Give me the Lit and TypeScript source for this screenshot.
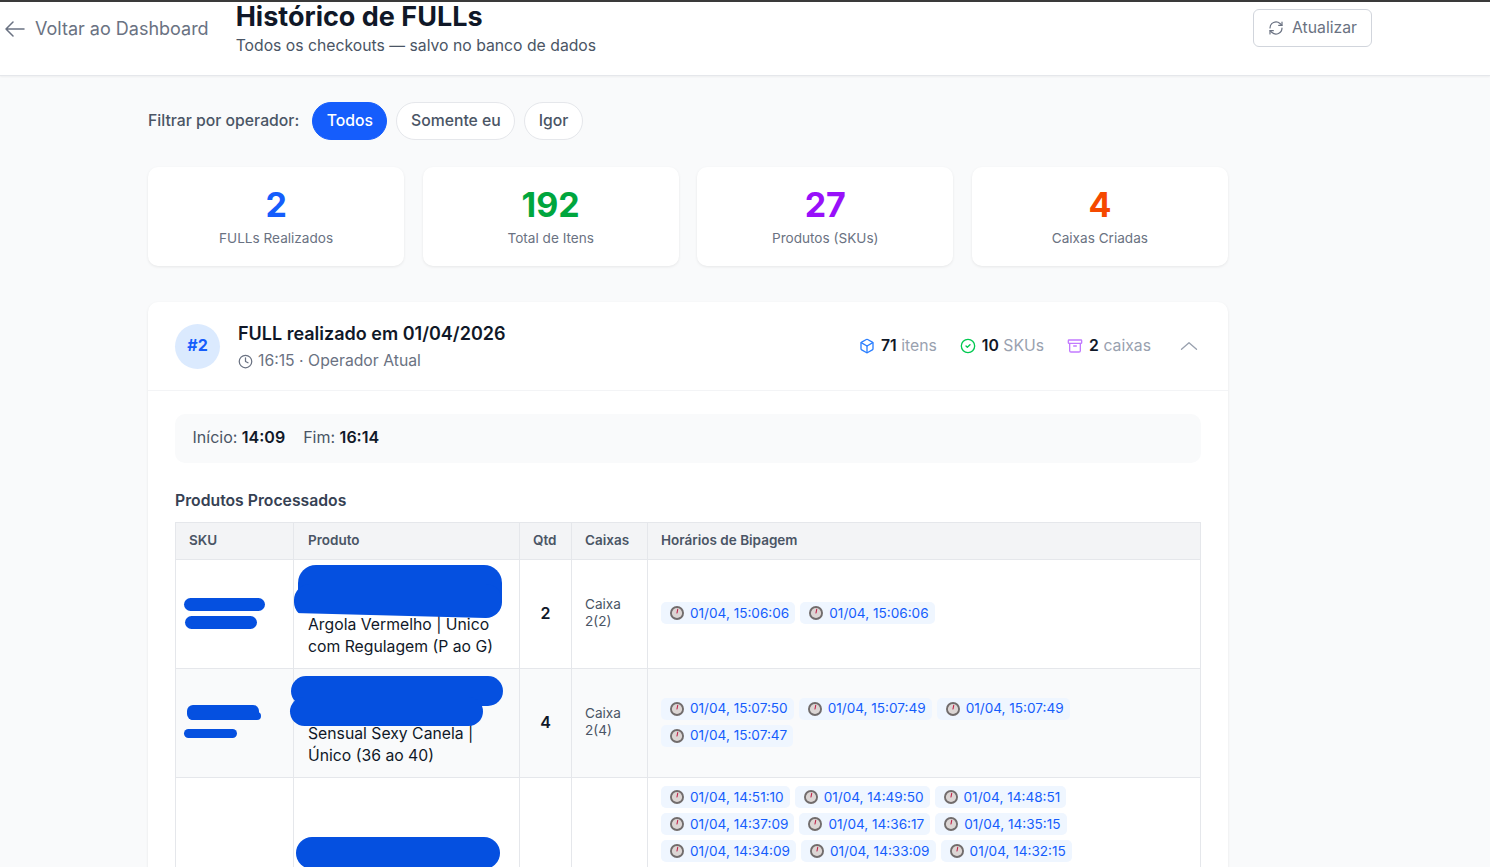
import { LitElement, html, css } from "lit";
import { customElement } from "lit/decorators.js";

const stopwatch = html`<svg class="sw" viewBox="0 0 14 14" aria-hidden="true">
  <circle cx="7" cy="7" r="7" fill="#716c6c"></circle>
  <circle cx="7" cy="7" r="5.1" fill="#dcd6d4"></circle>
  <path d="M7 7 7.7 3.4" stroke="#c2234a" stroke-width="1.1" stroke-linecap="round"></path>
</svg>`;

const chip = (t: string) => html`<span class="chip">${stopwatch}<span class="chip-t">${t}</span></span>`;

interface Row { qty: string; box: string; times: string[]; lines: string[]; alt?: boolean; kind: number }

const blank = "\u00a0";
const rows: Row[] = [
  { kind: 1, qty: "2", box: "2(2)", lines: [blank, blank, "Argola Vermelho | Unico", "com Regulagem (P ao G)"],
    times: ["15:06:06", "15:06:06"] },
  { kind: 2, alt: true, qty: "4", box: "2(4)", lines: [blank, blank, "Sensual Sexy Canela |", "Único (36 ao 40)"],
    times: ["15:07:50", "15:07:49", "15:07:49", "15:07:47"] },
  { kind: 3, qty: "", box: "", lines: [blank],
    times: ["14:51:10", "14:49:50", "14:48:51", "14:37:09", "14:36:17", "14:35:15", "14:34:09", "14:33:09", "14:32:15"] },
];

@customElement("app-root")
export class AppRoot extends LitElement {
  static styles = css`
    :host { display: block; height: 100vh; overflow: hidden; background: #f9fafb; font-family: Inter, "Liberation Sans", sans-serif; color: #101828; }
    * { box-sizing: border-box; }
    header { height: 76px; background: #fff; border-top: 2px solid #3a3a3a; border-bottom: 1px solid #e5e7eb; box-shadow: 0 1px 2px rgba(0,0,0,.05); display: flex; padding: 0 118px 0 5px; }
    .back { display: flex; align-items: center; gap: 10px; height: 53px; font-size: 18px; color: #6a7282; }
    .back svg { width: 20px; height: 20px; }
    .titles { margin: -3px 0 0 27px; flex: 1; }
    h1 { margin: 0; font-size: 27px; line-height: 36px; font-weight: 700; color: #101828; }
    .titles p { margin: -1px 0 0; font-size: 15.75px; line-height: 24px; color: #4a5565; }
    .refresh { margin-top: 7px; width: 119px; height: 38px; border: 1px solid #d1d5dc; border-radius: 6px; background: #fff; display: flex; align-items: center; justify-content: center; gap: 8px; font-size: 15.75px; color: #6a7282; padding-bottom: 2px; }
    .refresh svg { width: 16px; height: 16px; margin-top: 2px; }
    main { width: 1080px; margin: 26px 0 0 148px; }
    .filter { display: flex; align-items: center; gap: 9px; }
    .filter label { font-size: 15.75px; font-weight: 500; color: #4a5565; margin-right: 4px; padding-bottom: 2px; }
    .pill { height: 38px; padding: 0 13.5px 2px; border: 1px solid #e5e7eb; background: #fff; border-radius: 19px; display: flex; align-items: center; font-size: 15.75px; font-weight: 500; color: #4a5565; }
    .pill.on { background: #155dfc; border-color: #155dfc; color: #fff; }
    .stats { margin-top: 27px; display: grid; grid-template-columns: repeat(4, 1fr); gap: 18.4px; }
    .stat { height: 99px; background: #fff; border-radius: 10px; box-shadow: 0 1px 3px rgba(0,0,0,.08); display: flex; flex-direction: column; align-items: center; padding-top: 18px; }
    .stat b { font-size: 34px; line-height: 40px; font-weight: 700; }
    .stat span { margin-top: 3px; font-size: 13.6px; line-height: 20px; color: #6a7282; }
    .blue { color: #155dfc; } .green { color: #00a63e; } .purple { color: #9810fa; } .orange { color: #f54900; }
    .card { margin-top: 36px; background: #fff; border-radius: 10px; box-shadow: 0 1px 3px rgba(0,0,0,.08); }
    .card-head { height: 89px; display: flex; align-items: center; padding: 0 29px 0 27px; border-bottom: 1px solid #f3f4f6; }
    .avatar { width: 45px; height: 45px; border-radius: 50%; background: #dbeafe; color: #155dfc; display: flex; align-items: center; justify-content: center; font-size: 16px; font-weight: 700; padding-bottom: 3px; }
    .who { margin-left: 18px; flex: 1; }
    .who h2 { margin: 0; font-size: 18px; line-height: 28px; font-weight: 600; color: #101828; }
    .who div { display: flex; align-items: center; gap: 5px; font-size: 15.75px; line-height: 24px; color: #6a7282; margin-top: 1px; }
    .who svg { width: 15px; height: 15px; margin-top: 1px; }
    .counts { display: flex; align-items: center; gap: 23px; font-size: 15.75px; color: #99a1af; padding-bottom: 2px; }
    .count { display: flex; align-items: center; gap: 6px; }
    .count svg { width: 16px; height: 16px; margin-top: 2px; }
    .count b { color: #101828; font-weight: 600; margin-right: -1.5px; }
    .chev { width: 20px; height: 20px; margin-left: 5px; margin-top: 2px; }
    .body { padding: 23px 27px; }
    .info { height: 49px; background: #f9fafb; border-radius: 10px; display: flex; align-items: center; gap: 18px; padding: 0 17.5px 3px; font-size: 16px; color: #4a5565; }
    .info b { color: #101828; font-weight: 600; }
    h3 { margin: 26px 0 9px; font-size: 15.75px; line-height: 24px; font-weight: 600; color: #364153; }
    table { width: 1026px; border-collapse: collapse; table-layout: fixed; font-size: 13.6px; }
    th, td { border: 1px solid #e5e7eb; padding: 0 13px; }
    th { height: 37px; background: #f3f4f6; text-align: left; font-weight: 600; font-size: 13.5px; color: #4a5565; padding-bottom: 3px; }
    th.p { padding-left: 14px; }
    td { vertical-align: middle; }
    tr.alt td { background: #f9fafb; }
    tr.tall { height: 198px; }
    tr.tall .tcell { vertical-align: top; padding-top: 8px; }
    .sku { position: relative; }
    .prod { position: relative; font-size: 15.75px; line-height: 22px; padding: 10px 13px 10px 14px; color: #101828; }
    .qty { text-align: center; font-size: 16px; font-weight: 600; padding: 0 0 2px; }
    .box { color: #4a5565; line-height: 17px; padding-bottom: 3px; }
    .tcell { padding-bottom: 2px; }
    .times { display: flex; flex-wrap: wrap; gap: 5px; }
    .chip { display: inline-flex; align-items: center; gap: 6px; height: 22px; padding: 0 6px 0 9px; border-radius: 5px; background: #eff6ff; color: #155dfc; font-size: 13.6px; white-space: nowrap; }
    .chip-t { margin-top: -1px; }
    .sw { width: 14px; height: 14px; flex: none; }
    .ink { position: absolute; background: #0550e0; }
  `;

  private sku(kind: number) {
    if (kind === 1) return html`<div class="ink" style="left:8px;top:38px;width:81px;height:13px;border-radius:7px"></div>
      <div class="ink" style="left:9px;top:56px;width:72px;height:13px;border-radius:7px"></div>`;
    if (kind === 2) return html`<div class="ink" style="left:11px;top:36px;width:72px;height:15px;border-radius:6px"></div>
      <div class="ink" style="left:13px;top:43px;width:72px;height:8px;border-radius:4px"></div>
      <div class="ink" style="left:8px;top:60px;width:53px;height:9px;border-radius:5px"></div>`;
    return null;
  }

  private prodInk(kind: number) {
    if (kind === 1) return html`<div class="ink" style="left:4px;top:5px;width:204px;height:40px;border-radius:18px 18px 6px 6px"></div>
      <div class="ink" style="left:0;top:24px;width:208px;height:34px;border-radius:16px;clip-path:polygon(0 0,100% 0,100% 100%,92% 100%,0 85%)"></div>`;
    if (kind === 2) return html`<div class="ink" style="left:-3px;top:7px;width:212px;height:30px;border-radius:15px"></div>
      <div class="ink" style="left:-4px;top:28px;width:193px;height:29px;border-radius:15px"></div>`;
    return html`<div class="ink" style="left:2px;top:59px;width:204px;height:32px;border-radius:16px"></div>`;
  }

  render() {
    return html`
      <header>
        <div class="back">
          <svg viewBox="0 0 20 20" fill="none" stroke="#6a7282" stroke-width="1.5" stroke-linecap="round" stroke-linejoin="round"><path d="M8 3 1 10l7 7M1 10h18"></path></svg>
          Voltar ao Dashboard
        </div>
        <div class="titles">
          <h1>Histórico de FULLs</h1>
          <p>Todos os checkouts — salvo no banco de dados</p>
        </div>
        <div class="refresh">
          <svg viewBox="0 0 24 24" fill="none" stroke="#6a7282" stroke-width="1.8" stroke-linecap="round" stroke-linejoin="round"><path d="M3 12a9 9 0 0 1 15-6.7L21 8"></path><path d="M21 3v5h-5"></path><path d="M21 12a9 9 0 0 1-15 6.7L3 16"></path><path d="M8 16H3v5"></path></svg>
          Atualizar
        </div>
      </header>
      <main>
        <div class="filter">
          <label>Filtrar por operador:</label>
          <div class="pill on">Todos</div>
          <div class="pill">Somente eu</div>
          <div class="pill">Igor</div>
        </div>
        <div class="stats">
          <div class="stat"><b class="blue">2</b><span>FULLs Realizados</span></div>
          <div class="stat"><b class="green">192</b><span>Total de Itens</span></div>
          <div class="stat"><b class="purple">27</b><span>Produtos (SKUs)</span></div>
          <div class="stat"><b class="orange">4</b><span>Caixas Criadas</span></div>
        </div>
        <section class="card">
          <div class="card-head">
            <div class="avatar">#2</div>
            <div class="who">
              <h2>FULL realizado em 01/04/2026</h2>
              <div>
                <svg viewBox="0 0 24 24" fill="none" stroke="#6a7282" stroke-width="2" stroke-linecap="round" stroke-linejoin="round"><circle cx="12" cy="12" r="10"></circle><path d="M12 6v6l4 2"></path></svg>
                16:15 · Operador Atual
              </div>
            </div>
            <div class="counts">
              <span class="count"><svg viewBox="0 0 24 24" fill="none" stroke="#2b7fff" stroke-width="2" stroke-linecap="round" stroke-linejoin="round"><path d="M21 8a2 2 0 0 0-1-1.73l-7-4a2 2 0 0 0-2 0l-7 4A2 2 0 0 0 3 8v8a2 2 0 0 0 1 1.73l7 4a2 2 0 0 0 2 0l7-4A2 2 0 0 0 21 16Z"></path><path d="m3.3 7 8.7 5 8.7-5"></path><path d="M12 22V12"></path></svg><b>71</b> itens</span>
              <span class="count"><svg viewBox="0 0 24 24" fill="none" stroke="#00c950" stroke-width="2" stroke-linecap="round" stroke-linejoin="round"><circle cx="12" cy="12" r="10"></circle><path d="m9 12 2 2 4-4"></path></svg><b>10</b> SKUs</span>
              <span class="count"><svg viewBox="0 0 24 24" fill="none" stroke="#c27aff" stroke-width="2" stroke-linecap="round" stroke-linejoin="round"><rect x="2" y="3" width="20" height="5" rx="1"></rect><path d="M4 8v11a2 2 0 0 0 2 2h12a2 2 0 0 0 2-2V8"></path><path d="M10 12h4"></path></svg><b>2</b> caixas</span>
              <svg class="chev" viewBox="0 0 24 24" fill="none" stroke="#99a1af" stroke-width="1.6" stroke-linecap="round" stroke-linejoin="round"><path d="m3 16 9-8 9 8"></path></svg>
            </div>
          </div>
          <div class="body">
            <div class="info"><span>Início: <b>14:09</b></span><span>Fim: <b>16:14</b></span></div>
            <h3>Produtos Processados</h3>
            <table>
              <colgroup><col style="width:118px"><col style="width:226px"><col style="width:52px"><col style="width:76px"><col></colgroup>
              <thead><tr><th>SKU</th><th class="p">Produto</th><th>Qtd</th><th>Caixas</th><th>Horários de Bipagem</th></tr></thead>
              <tbody>
                ${rows.map((r) => html`<tr class="${r.alt ? "alt" : ""} ${r.kind === 3 ? "tall" : ""}">
                  <td class="sku">${this.sku(r.kind)}</td>
                  <td class="prod">${r.lines.map((l) => html`${l}<br>`)}${this.prodInk(r.kind)}</td>
                  <td class="qty">${r.qty}</td>
                  <td class="box">Caixa<br>${r.box}</td>
                  <td class="tcell"><div class="times">${r.times.map((t) => chip("01/04, " + t))}</div></td>
                </tr>`)}
              </tbody>
            </table>
          </div>
        </section>
      </main>
    `;
  }
}
